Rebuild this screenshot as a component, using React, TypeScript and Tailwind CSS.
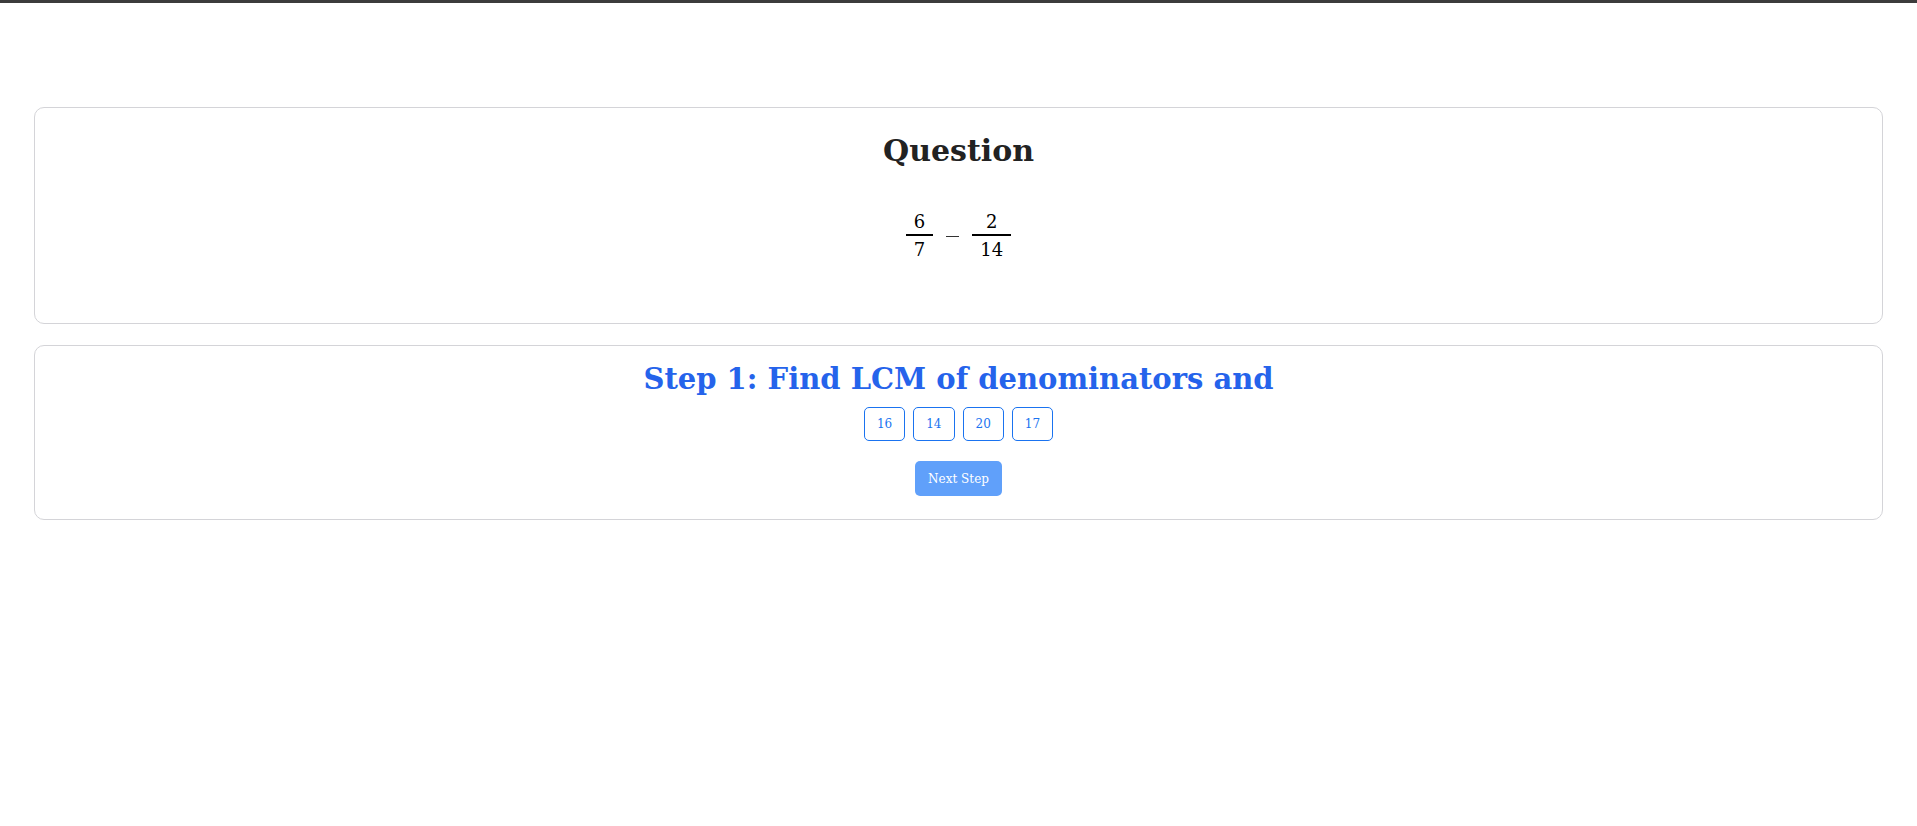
import { useState } from "react"

const options = [16, 14, 20, 17]

function Fraction({ num, den }: { num: number; den: number }) {
  return (
    <span className="inline-flex flex-col items-center">
      <span className="px-[8px] leading-[25px]">{num}</span>
      <span className="h-[2px] w-full bg-black" />
      <span className="px-[8px] leading-[28px]">{den}</span>
    </span>
  )
}

export default function App() {
  const [picked, setPicked] = useState<number | null>(null)

  return (
    <div className="min-h-screen bg-white font-['DejaVu_Serif',serif] text-[#222]">
      <div className="h-[3px] bg-[#3c3c3c]" />

      <div className="flex flex-col gap-[21px] px-[34px] pt-[104px]">
        <section className="flex h-[217px] flex-col items-center rounded-[10px] border border-[#d4d4d8] pt-[23px]">
          <h1 className="text-[30px] font-bold leading-[40px] text-[#222]">Question</h1>
          <div className="mt-[38px] flex items-center gap-[13px] text-[18px] text-black">
            <Fraction num={6} den={7} />
            <span className="h-[1.5px] w-[13px] bg-[#333]" />
            <Fraction num={2} den={14} />
          </div>
        </section>

        <section className="flex h-[175px] flex-col items-center rounded-[10px] border border-[#d4d4d8] pt-[14px]">
          <h2 className="text-[29px] font-bold leading-[38px] text-[#2563eb]">
            Step 1: Find LCM of denominators and
          </h2>
          <div className="mt-[9px] flex gap-[8px]">
            {options.map((n) => (
              <button
                key={n}
                onClick={() => setPicked(n)}
                className={
                  "h-[34px] rounded-[5px] border border-[#1a73f0] px-[12px] text-[12px] text-[#1a73f0] " +
                  (picked === n ? "bg-blue-50" : "bg-white")
                }
              >
                {n}
              </button>
            ))}
          </div>
          <button className="mt-[20px] h-[35px] rounded-[5px] bg-[#60a0fa] px-[13px] text-[12px] text-white">
            Next Step
          </button>
        </section>
      </div>
    </div>
  )
}
